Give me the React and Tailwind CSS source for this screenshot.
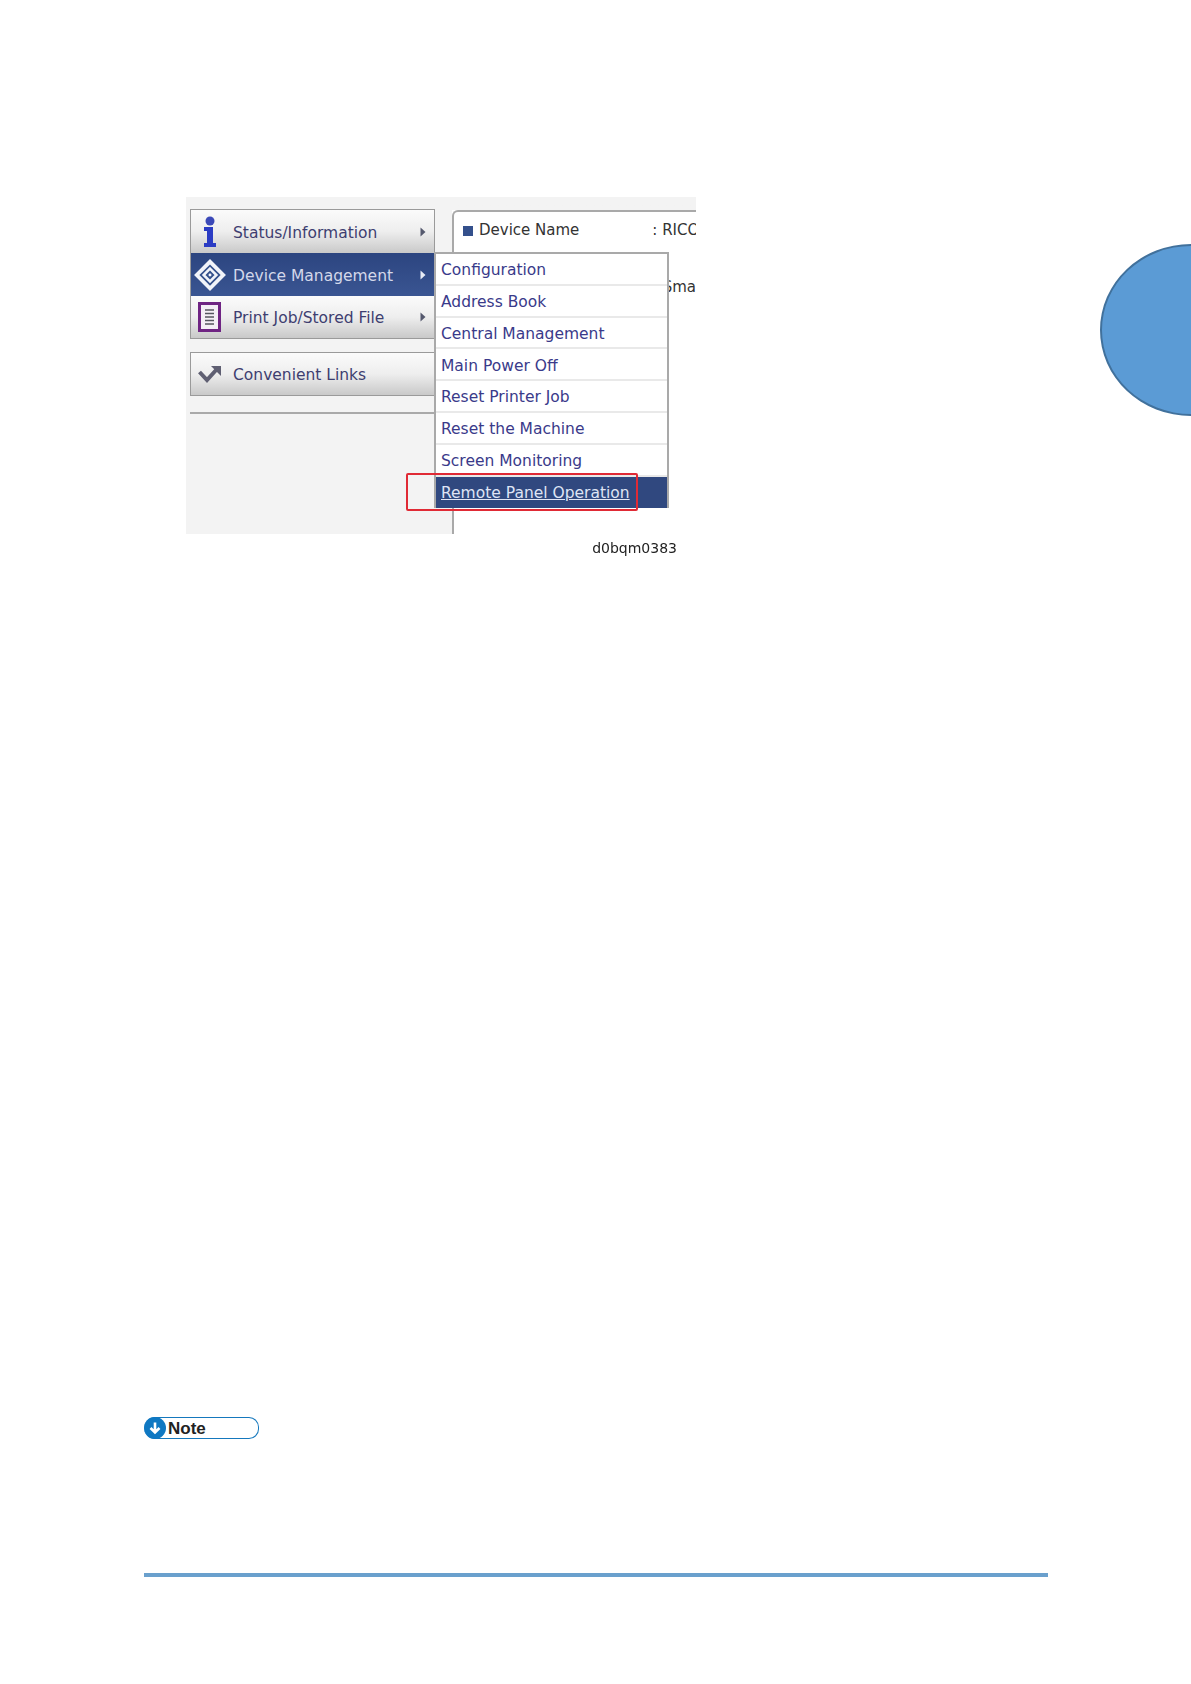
const sans = "font-['DejaVu_Sans',sans-serif]";

const menuItems = [
  "Configuration",
  "Address Book",
  "Central Management",
  "Main Power Off",
  "Reset Printer Job",
  "Reset the Machine",
  "Screen Monitoring",
];

function Arrow({ light }) {
  return (
    <svg width="6" height="10" viewBox="0 0 6 10" className="ml-auto mr-[8px] shrink-0">
      <path d="M0.5 0.5 L5.5 5 L0.5 9.5 Z" fill={light ? "#e8ecf6" : "#55596e"} />
    </svg>
  );
}

function InfoIcon() {
  return (
    <svg width="20" height="32" viewBox="0 0 20 32">
      <circle cx="10" cy="5" r="4.5" fill="#3b49b8" />
      <path d="M4 11 H13 V27 H16 V31 H4 V27 H7 V15 H4 Z" fill="#2b3cc4" />
    </svg>
  );
}

function DeviceIcon() {
  return (
    <svg width="34" height="34" viewBox="0 0 32 32" className="shrink-0">
      <path d="M16 1 L31 16 L16 31 L1 16 Z" fill="#f2f4fa" />
      <path d="M16 6 L26 16 L16 26 L6 16 Z" fill="#34508c" />
      <path d="M16 10 L22 16 L16 22 L10 16 Z" fill="none" stroke="#f2f4fa" strokeWidth="2.4" />
      <circle cx="16" cy="16" r="1.4" fill="#f2f4fa" />
    </svg>
  );
}

function DocIcon() {
  return (
    <svg width="24" height="30" viewBox="0 0 24 30">
      <rect x="1.5" y="1.5" width="20" height="27" fill="#f4eef6" stroke="#6f2483" strokeWidth="3" />
      <path d="M7 8 H16 M7 11.5 H16 M7 15 H16 M7 18.5 H16 M7 22 H16" stroke="#55555f" strokeWidth="1.6" />
    </svg>
  );
}

function LinkIcon() {
  return (
    <svg width="24" height="18" viewBox="0 0 24 18">
      <path d="M1.5 7 L9 15 L19 4" fill="none" stroke="#5f5f72" strokeWidth="4" />
      <path d="M13 1 H23 V11 Z" fill="#5f5f72" />
    </svg>
  );
}

function SideRow({ icon, label, active, arrow = true, height = "h-[43px]" }) {
  return (
    <div
      className={`flex items-center ${height} ${
        active
          ? "bg-gradient-to-b from-[#2c4580] to-[#3a5592] text-[#d3d8ea]"
          : "bg-gradient-to-b from-[#fbfbfb] via-[#eeeeee] to-[#c9c9c9] text-[#3e3e70]"
      }`}
    >
      <div className="flex w-[38px] shrink-0 items-center justify-center">{icon}</div>
      <span className="ml-[4px] pt-[4px] text-[15.5px] leading-none">{label}</span>
      {arrow && <Arrow light={active} />}
    </div>
  );
}

export default function App() {
  return (
    <div className={`relative h-[1684px] overflow-hidden bg-white ${sans}`}>
      {/* chapter tab */}
      <div className="absolute left-[1100px] top-[244px] h-[172px] w-[182px] rounded-[50%] border-2 border-[#41719c] bg-[#5b9bd5]" />

      <div className="pl-[186px] pt-[197px]">
        <div className="relative w-[510px]">
          <div className="relative blur-[0.75px]">
            <div className="flex h-[337px] overflow-hidden">
              {/* sidebar */}
              <div className="w-[266px] shrink-0 bg-[#f3f3f3] pl-[4px] pt-[12px]">
                <div className="w-[245px] border border-[#9a9a9a]">
                  <SideRow icon={<InfoIcon />} label="Status/Information" />
                  <SideRow icon={<DeviceIcon />} label="Device Management" active />
                  <SideRow icon={<DocIcon />} label="Print Job/Stored File" height="h-[42px]" />
                </div>
                <div className="mt-[13px] w-[245px] border border-[#9a9a9a]">
                  <SideRow icon={<LinkIcon />} label="Convenient Links" arrow={false} height="h-[42px]" />
                </div>
                <div className="mt-[16px] h-[2px] w-[245px] bg-[#a9a9a9]" />
              </div>
              {/* content */}
              <div className="min-w-0 flex-1 overflow-hidden bg-gradient-to-b from-[#f3f3f3] from-[13px] to-white to-[13px]">
                <div className="mt-[13px] h-full rounded-tl-[6px] border-l-2 border-t-2 border-[#a9a9a9] bg-white text-[15px] text-[#333333]">
                  <div className="flex items-center whitespace-nowrap pl-[9px] pt-[11px] leading-none">
                    <span className="mr-[6px] h-[10px] w-[10px] shrink-0 bg-[#34508c]" />
                    <span>Device Name</span>
                    <span className="ml-[73px]">: RICO</span>
                  </div>
                  <div className="mt-[42px] text-right leading-none">Sma</div>
                </div>
              </div>
            </div>

            {/* dropdown */}
            <div className="absolute left-[248px] top-[55px] w-[235px] border-x-2 border-t-2 border-[#a9a9a9] bg-white text-[15.5px] leading-none text-[#3a3a8a]">
              {menuItems.map((item) => (
                <div key={item} className="flex h-[31.8px] items-center border-b-2 border-[#e9e9e9] pl-[5px] pt-[4px]">
                  {item}
                </div>
              ))}
              <div className="flex h-[31px] items-center bg-[#30487f] pl-[5px] pt-[4px] text-[#dfe4f5] underline">
                Remote Panel Operation
              </div>
            </div>

            <div className="mr-[19px] mt-[6px] text-right text-[14px] leading-[17px] text-[#222222]">d0bqm0383</div>
          </div>

          {/* red highlight */}
          <div className="absolute left-[220px] top-[276px] h-[38px] w-[232px] rounded-[2px] border-2 border-[#e02a35]" />
        </div>

        {/* note badge */}
        <div className="-ml-[42px] mt-[860px] flex h-[22px] w-[115px] items-center rounded-l-[11px] rounded-r-[10px] border-[1.5px] border-l-0 border-[#1578bd]">
          <div className="-my-[2px] flex h-[22px] w-[22px] shrink-0 items-center justify-center rounded-full bg-[#0f78c2]">
            <svg width="14" height="14" viewBox="0 0 14 14">
              <path d="M7 1.5 V11 M2.5 7 L7 11.5 L11.5 7" fill="none" stroke="white" strokeWidth="2.6" />
            </svg>
          </div>
          <span className="ml-[2px] font-['Liberation_Sans',sans-serif] text-[17px] font-bold leading-none text-[#222222]">Note</span>
        </div>

        {/* footer rule */}
        <div className="-ml-[42px] mt-[134px] h-[4px] w-[904px] bg-[#6aa0cd]" />
      </div>
    </div>
  );
}
